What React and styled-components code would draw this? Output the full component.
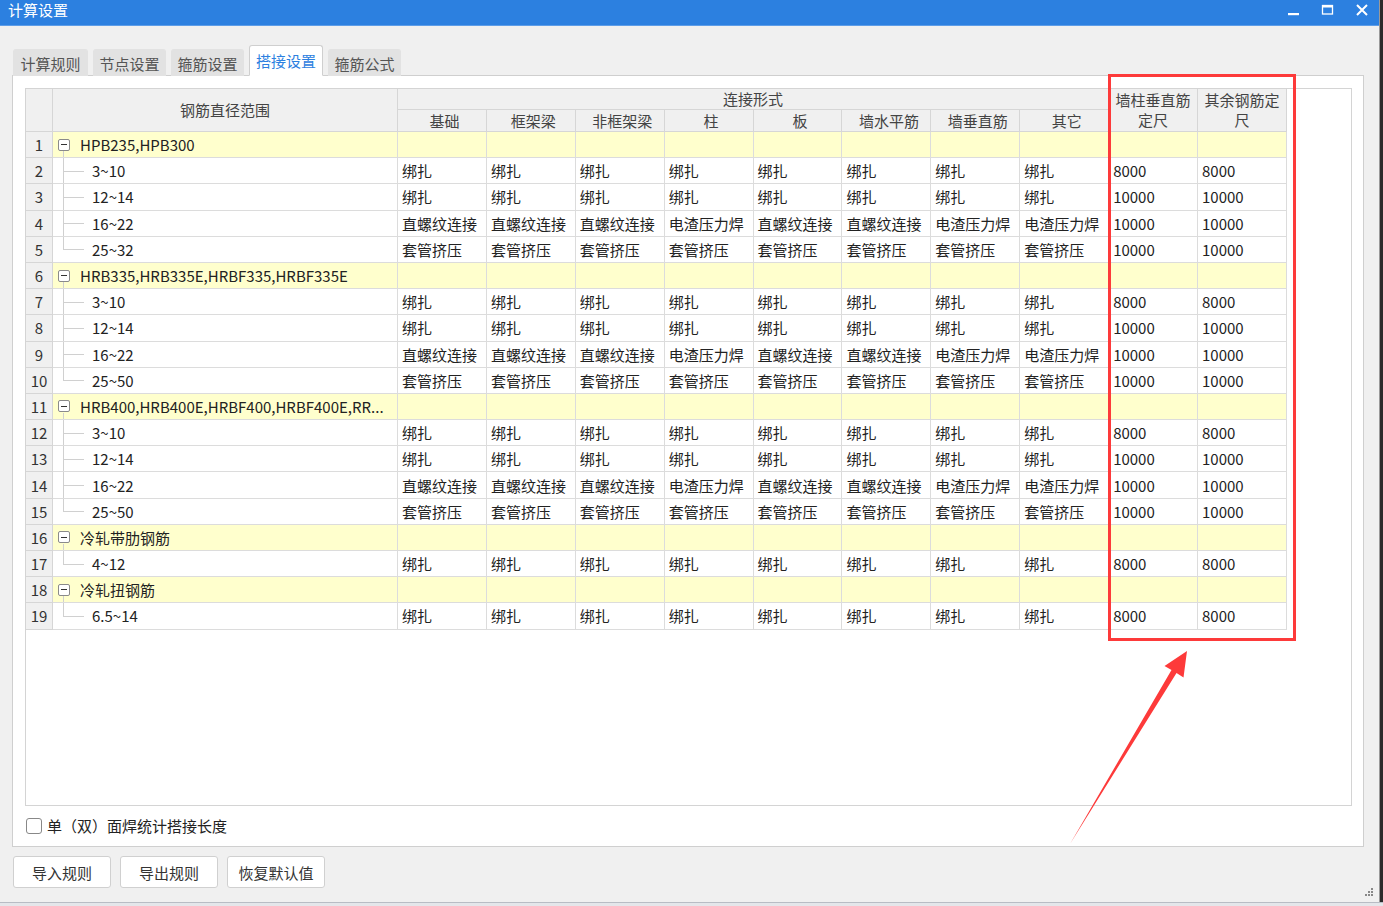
import React from "react";
import styled, { createGlobalStyle } from "styled-components";

const GlobalStyle = createGlobalStyle`
  html, body {
    margin: 0;
    padding: 0;
    background: #2b2b2b;
  }
  body {
    font-family: "Noto Sans CJK SC", "Noto Sans", sans-serif;
    font-size: 15px;
    color: #222;
  }
`;

const B = "绑扎";
const Z = "直螺纹连接";
const D = "电渣压力焊";
const T = "套管挤压";

const KIND = {
  b: [B, B, B, B, B, B, B, B],
  z: [Z, Z, Z, D, Z, Z, D, D],
  t: [T, T, T, T, T, T, T, T],
};

const groups = [
  {
    name: "HPB235,HPB300",
    rows: [
      ["3~10", "b", "8000"],
      ["12~14", "b", "10000"],
      ["16~22", "z", "10000"],
      ["25~32", "t", "10000"],
    ],
  },
  {
    name: "HRB335,HRB335E,HRBF335,HRBF335E",
    rows: [
      ["3~10", "b", "8000"],
      ["12~14", "b", "10000"],
      ["16~22", "z", "10000"],
      ["25~50", "t", "10000"],
    ],
  },
  {
    name: "HRB400,HRB400E,HRBF400,HRBF400E,RR...",
    rows: [
      ["3~10", "b", "8000"],
      ["12~14", "b", "10000"],
      ["16~22", "z", "10000"],
      ["25~50", "t", "10000"],
    ],
  },
  { name: "冷轧带肋钢筋", rows: [["4~12", "b", "8000"]] },
  { name: "冷轧扭钢筋", rows: [["6.5~14", "b", "8000"]] },
];

const subHeads = ["基础", "框架梁", "非框架梁", "柱", "板", "墙水平筋", "墙垂直筋", "其它"];
const tabs = ["计算规则", "节点设置", "箍筋设置", "搭接设置", "箍筋公式"];

const App = () => {
  let n = 0;
  const body = [];
  groups.forEach((g) => {
    n += 1;
    body.push(
      <tr key={"g" + n}>
        <NumCell>{n}</NumCell>
        <RangeCell $kind="group" $group>
          <Collapse />
          {g.name}
        </RangeCell>
        {Array.from({ length: 10 }).map((_, i) => (
          <DataCell key={i} $group />
        ))}
      </tr>
    );
    g.rows.forEach((r, idx) => {
      n += 1;
      const last = idx === g.rows.length - 1;
      body.push(
        <tr key={"r" + n}>
          <NumCell>{n}</NumCell>
          <RangeCell $kind={last ? "last" : "child"}>{r[0]}</RangeCell>
          {KIND[r[1]].map((v, i) => (
            <DataCell key={i}>{v}</DataCell>
          ))}
          <DataCell>{r[2]}</DataCell>
          <DataCell>{r[2]}</DataCell>
        </tr>
      );
    });
  });

  return (
    <>
      <GlobalStyle />
      <Screen>
        <Window>
          <TitleBar>
            <Title>计算设置</Title>
            <WinControls>
              <svg width="14" height="14" viewBox="0 0 14 14">
                <rect x="1" y="10" width="11" height="2.2" fill="#fff" />
              </svg>
              <svg width="14" height="14" viewBox="0 0 14 14">
                <rect x="1.5" y="2.5" width="10" height="8.5" fill="none" stroke="#fff" strokeWidth="1.3" />
                <rect x="1.5" y="2.5" width="10" height="2" fill="#fff" />
              </svg>
              <svg width="14" height="14" viewBox="0 0 14 14">
                <path d="M2 2 L12 12 M12 2 L2 12" stroke="#fff" strokeWidth="2" />
              </svg>
            </WinControls>
          </TitleBar>

          <Content>
            <TabRow>
              {tabs.map((t) => (
                <Tab key={t} $active={t === "搭接设置"}>
                  {t}
                </Tab>
              ))}
            </TabRow>

            <Panel>
              <GridBox>
                <Table>
                  <colgroup>
                    <col style={{ width: 27 }} />
                    <col style={{ width: 345 }} />
                    {Array.from({ length: 10 }).map((_, i) => (
                      <col key={i} style={{ width: 88.9 }} />
                    ))}
                  </colgroup>
                  <thead>
                    <tr>
                      <HeadCell rowSpan={2} />
                      <HeadCell rowSpan={2}>钢筋直径范围</HeadCell>
                      <HeadCell colSpan={8} $h={21}>
                        连接形式
                      </HeadCell>
                      <HeadCell rowSpan={2} $wrap>
                        墙柱垂直筋
                        <br />
                        定尺
                      </HeadCell>
                      <HeadCell rowSpan={2} $wrap>
                        其余钢筋定
                        <br />尺
                      </HeadCell>
                    </tr>
                    <tr>
                      {subHeads.map((h) => (
                        <HeadCell key={h} $h={22} $sub>
                          {h}
                        </HeadCell>
                      ))}
                    </tr>
                  </thead>
                  <tbody>{body}</tbody>
                </Table>
              </GridBox>

              <CheckRow>
                <CheckBox />
                <span>单（双）面焊统计搭接长度</span>
              </CheckRow>
            </Panel>

            <ButtonRow>
              <Button>导入规则</Button>
              <Button>导出规则</Button>
              <Button>恢复默认值</Button>
            </ButtonRow>
          </Content>

          <Grip>
            <svg width="10" height="10" viewBox="0 0 10 10">
              <rect x="7" y="1" width="2" height="2" fill="#888" />
              <rect x="4" y="4" width="2" height="2" fill="#888" />
              <rect x="7" y="4" width="2" height="2" fill="#888" />
              <rect x="1" y="7" width="2" height="2" fill="#888" />
              <rect x="4" y="7" width="2" height="2" fill="#888" />
              <rect x="7" y="7" width="2" height="2" fill="#888" />
            </svg>
          </Grip>

          <Annotation width="1380" height="902" viewBox="0 0 1380 902">
            <rect x="1109.5" y="75.5" width="185" height="564" fill="none" stroke="#fd3a3a" strokeWidth="3" />
            <polygon
              points="1070,844 1171.5,670 1164.5,666 1187,651 1183.5,677.5 1176.5,673"
              fill="#fd3a3a"
            />
          </Annotation>
        </Window>
        <BackStrip />
      </Screen>
    </>
  );
};

export default App;

const Screen = styled.div`
  width: 1383px;
  height: 906px;
  overflow: hidden;
  background: #2b2b2b;
`;

const Window = styled.div`
  position: relative;
  width: 1379px;
  height: 902px;
  background: #f0f0f0;
  border-right: 1px solid #9a9a9a;
  display: flex;
  flex-direction: column;
`;

const BackStrip = styled.div`
  height: 4px;
  width: 1383px;
  background: #e4e6ea;
  border-top: 1px solid #b8bcc4;
`;

const TitleBar = styled.div`
  height: 26px;
  flex-shrink: 0;
  background: #2c80e0;
  border-bottom: 1px solid #5d9de8;
  box-sizing: border-box;
  display: flex;
  align-items: flex-start;
  justify-content: space-between;
  padding: 1px 10px 0 8px;
`;

const Title = styled.div`
  color: #fff;
  font-size: 15px;
  line-height: 18px;
`;

const WinControls = styled.div`
  display: flex;
  gap: 20px;
  margin-top: 2px;

  svg {
    display: block;
  }
`;

const Content = styled.div`
  display: flex;
  flex-direction: column;
  padding: 19px 15px 0 12px;
`;

const TabRow = styled.div`
  display: flex;
  align-items: flex-end;
  gap: 5px;
  padding-left: 1px;
  height: 31px;
  margin-bottom: -1px;
  position: relative;
  z-index: 1;
`;

const Tab = styled.div`
  box-sizing: border-box;
  height: ${(p) => (p.$active ? "31px" : "27px")};
  width: ${(p) => (p.$active ? "74px" : "73px")};
  display: flex;
  align-items: center;
  justify-content: center;
  font-size: 15px;
  white-space: nowrap;
  color: ${(p) => (p.$active ? "#2c80e0" : "#555")};
  background: ${(p) => (p.$active ? "#fff" : "#e2e2e2")};
  border: 1px solid ${(p) => (p.$active ? "#cfcfcf" : "#e2e2e2")};
  border-bottom: ${(p) => (p.$active ? "1px solid #fff" : "none")};
  border-radius: 3px 3px 0 0;
  padding-bottom: ${(p) => (p.$active ? "1px" : "0")};

  &:first-child {
    width: 75px;
  }
`;

const Panel = styled.div`
  box-sizing: border-box;
  height: 772px;
  background: #fff;
  border: 1px solid #cfcfcf;
  padding: 12px 11px 0 12px;
  display: flex;
  flex-direction: column;
`;

const GridBox = styled.div`
  box-sizing: border-box;
  height: 718px;
  border: 1px solid #d4d4d4;
  background: #fff;
  overflow: hidden;
`;

const Table = styled.table`
  table-layout: fixed;
  border-collapse: collapse;
  width: 1261px;
  margin: -1px 0 0 -1px;
`;

const HeadCell = styled.th`
  background: #f0f0f0;
  border: 1px solid #d6d6d6;
  font-weight: normal;
  color: #444;
  font-size: 15px;
  text-align: center;
  padding: 0 0 0 ${(p) => (p.$sub ? "5px" : "0")};
  height: ${(p) => (p.$h ? p.$h + "px" : "auto")};
  line-height: ${(p) => (p.$wrap ? "20px" : "18px")};
  box-sizing: border-box;
  white-space: nowrap;
`;

const NumCell = styled.td`
  background: #f0f0f0;
  border: 1px solid #d6d6d6;
  text-align: center;
  color: #333;
  height: 26.2px;
  padding: 0;
  box-sizing: border-box;
`;

const RangeCell = styled.td`
  position: relative;
  background: ${(p) => (p.$group ? "#ffffcd" : "#fff")};
  border: 1px solid #dcdcdc;
  padding: 0 0 0 ${(p) => (p.$kind === "group" ? "27px" : "39px")};
  height: 26.2px;
  box-sizing: border-box;
  white-space: nowrap;
  overflow: hidden;

  &::before {
    content: "";
    position: absolute;
    left: 10px;
    width: 0;
    border-left: 1px solid #d0d0d0;
    top: ${(p) => (p.$kind === "group" ? "19px" : "0")};
    bottom: ${(p) => (p.$kind === "last" ? "50%" : "0")};
  }

  &::after {
    content: "";
    position: absolute;
    left: 10px;
    top: 50%;
    width: ${(p) => (p.$kind === "group" ? "0" : "21px")};
    border-top: 1px solid #d0d0d0;
  }
`;

const Collapse = styled.span`
  position: absolute;
  left: 5px;
  top: 50%;
  margin-top: -6px;
  width: 12px;
  height: 12px;
  box-sizing: border-box;
  border: 1px solid #8a8a8a;
  border-radius: 2px;
  background: #fff;

  &::after {
    content: "";
    position: absolute;
    left: 2px;
    right: 2px;
    top: 4.5px;
    border-top: 1px solid #333;
  }
`;

const DataCell = styled.td`
  background: ${(p) => (p.$group ? "#ffffcd" : "#fff")};
  border: 1px solid #dcdcdc;
  padding: 0 0 0 4px;
  height: 26.2px;
  box-sizing: border-box;
  white-space: nowrap;
  overflow: hidden;
`;

const CheckRow = styled.div`
  display: flex;
  align-items: center;
  gap: 5px;
  margin-top: 9px;
  margin-left: 1px;
  color: #222;
`;

const CheckBox = styled.span`
  width: 16px;
  height: 16px;
  box-sizing: border-box;
  border: 1px solid #888;
  border-radius: 3px;
  background: #fff;
`;

const ButtonRow = styled.div`
  display: flex;
  gap: 9px;
  margin-top: 9px;
  padding-left: 1px;
`;

const Button = styled.div`
  box-sizing: border-box;
  width: 98px;
  height: 32px;
  background: #fff;
  border: 1px solid #d0d0d0;
  border-radius: 3px;
  display: flex;
  align-items: center;
  justify-content: center;
  color: #333;
  font-size: 15px;
`;

const Grip = styled.div`
  position: absolute;
  right: 5px;
  bottom: 5px;

  svg {
    display: block;
  }
`;

const Annotation = styled.svg`
  position: absolute;
  left: 0;
  top: 0;
  pointer-events: none;
`;
